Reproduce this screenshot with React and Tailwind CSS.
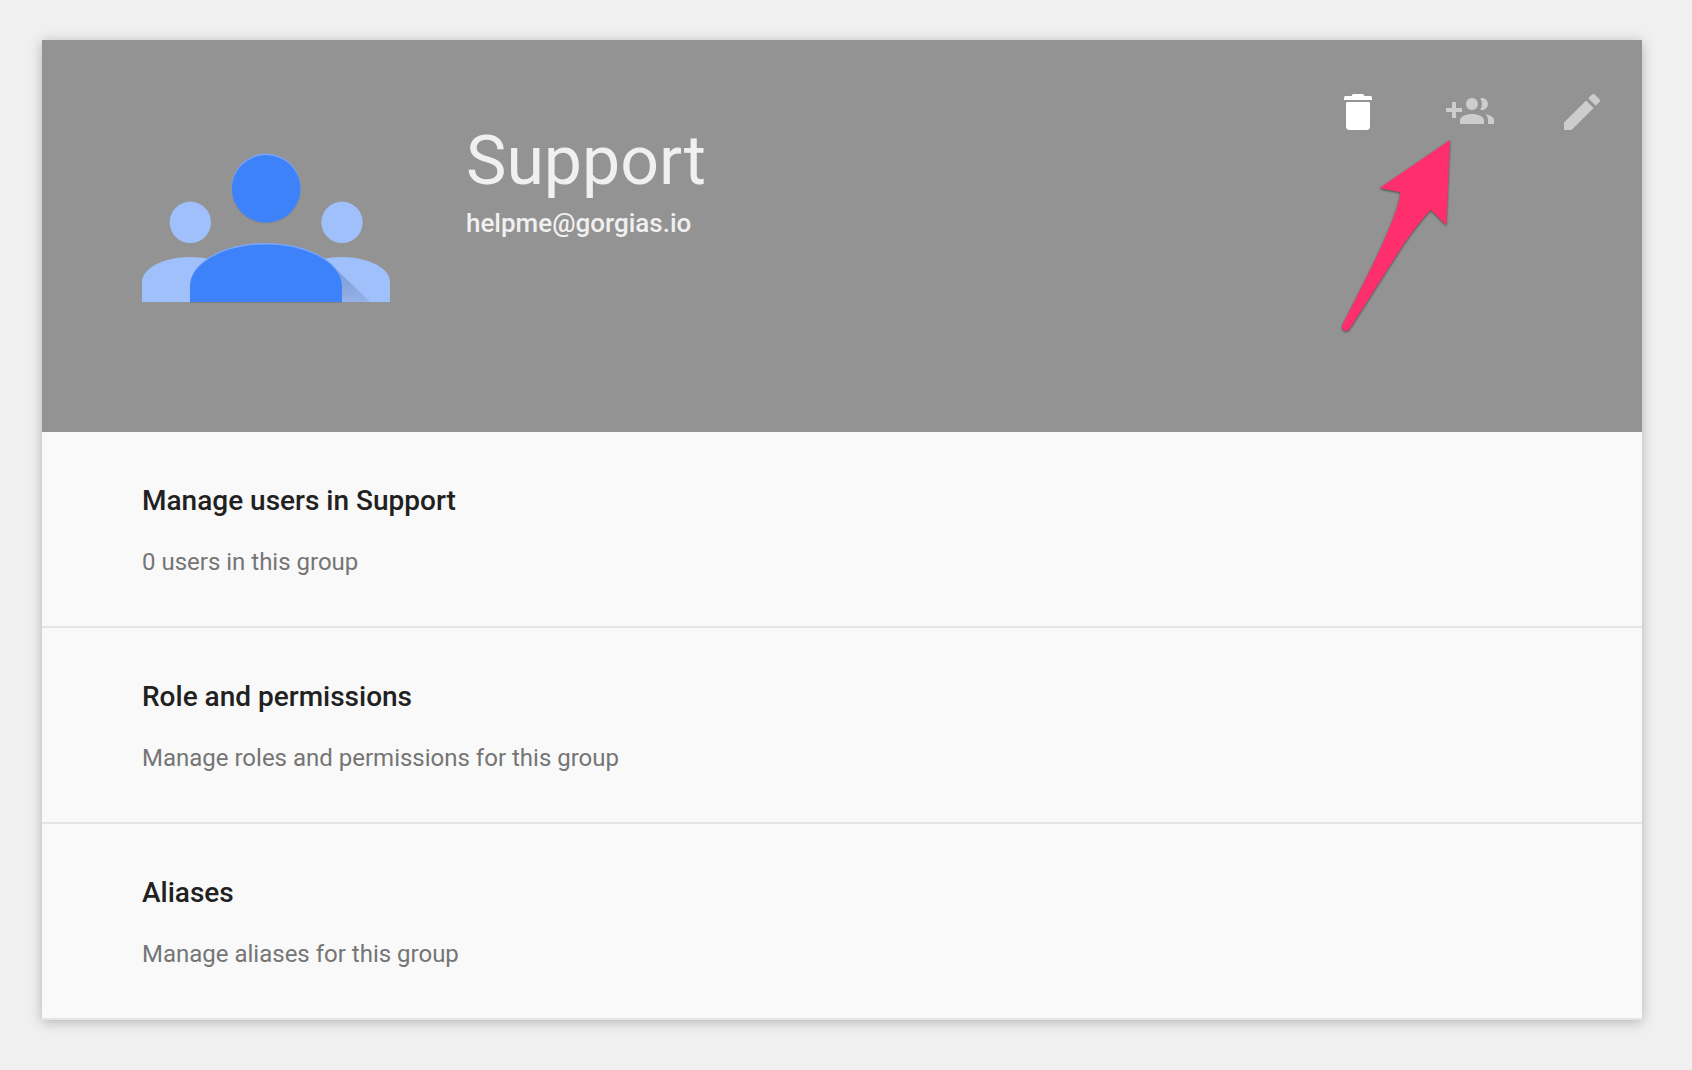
const sections = [
  { title: "Manage users in Support", detail: "0 users in this group" },
  { title: "Role and permissions", detail: "Manage roles and permissions for this group" },
  { title: "Aliases", detail: "Manage aliases for this group" },
];

const actions = [
  {
    label: "Delete group",
    tone: "text-white",
    path: "M6 19.400c0 .9.700 1.600 1.600 1.600h8.800c.9 0 1.600-.7 1.600-1.600V7.700a.7.7 0 0 0-.7-.7H6.700a.7.7 0 0 0-.7.7zM18.200 4H15.200c-.3-.7-.6-1-1.200-1h-4c-.6 0-.9.300-1.200 1H5.800a.8.8 0 0 0-.8.8V6h14V4.800a.8.8 0 0 0-.8-.8z",
  },
  {
    label: "Add users",
    tone: "text-[#cdcdcd]",
    path: "M8 10H5V7H3v3H0v2h3v3h2v-3h3v-2zm10 1c1.660 0 2.990-1.340 2.990-3S19.660 5 18 5c-.32 0-.63.05-.91.14.57.81.9 1.790.9 2.860s-.34 2.040-.9 2.860c.28.09.59.14.91.14zm-5 0c1.660 0 2.990-1.340 2.990-3S14.660 5 13 5c-1.660 0-3 1.340-3 3s1.340 3 3 3zm6.620 2.160c.83.73 1.380 1.660 1.380 2.840v2h3v-2c0-1.540-2.370-2.490-4.380-2.840zM13 13c-2 0-6 1-6 3v2h12v-2c0-2-4-3-6-3z",
  },
  {
    label: "Edit group",
    tone: "text-[#cdcdcd]",
    path: "M3 17.250V21h3.750L17.810 9.940l-3.750-3.750L3 17.250zM20.710 7.040c.39-.39.39-1.020 0-1.410l-2.340-2.340c-.39-.39-1.020-.39-1.410 0l-1.830 1.830 3.750 3.750 1.830-1.830z",
  },
];

function GroupLogo() {
  const body = "M48 150V133C48 110 82 91 124 91S200 110 200 133V150Z";
  return (
    <svg viewBox="0 0 248 152" className="h-[152px] w-[248px] shrink-0" aria-hidden="true">
      <defs>
        <linearGradient id="cast" x1="0" y1="0" x2="0" y2="1">
          <stop offset="0" stopColor="#7c9cd0" />
          <stop offset="1" stopColor="#94b1e8" />
        </linearGradient>
        <clipPath id="headClip"><circle cx="124.200" cy="36" r="34.500" /></clipPath>
        <clipPath id="bodyClip"><path d={body} /></clipPath>
      </defs>
      <g fill="#a0c0fc">
        <circle cx="48.300" cy="70.300" r="20.700" />
        <circle cx="200" cy="70.300" r="20.700" />
        <path d="M0 150V130C0 116 22 105 48 105S96 116 96 130V150Z" />
        <path d="M152 150V130C152 116 174 105 200 105S248 116 248 130V150Z" />
      </g>
      <path d="M194 117L228 150H198Z" fill="url(#cast)" />
      <g fill="#6f777f" opacity="0.6">
        <circle cx="124.200" cy="37" r="34.500" />
        <path d="M48 151V140H200V151Z" />
      </g>
      <circle cx="124.200" cy="36" r="34.500" fill="#78a6fa" />
      <circle cx="124.200" cy="37.500" r="34.500" fill="#3d82f8" clipPath="url(#headClip)" />
      <path d={body} fill="#78a6fa" />
      <g clipPath="url(#bodyClip)">
        <path d="M48 153V134.500C48 111.500 82 92.500 124 92.500S200 111.500 200 134.500V153Z" fill="#3d82f8" />
      </g>
    </svg>
  );
}

function Pointer() {
  return (
    <svg
      viewBox="60 198 342 606"
      className="pointer-events-none absolute top-24 right-[188px] h-[202px] w-[114px] overflow-visible drop-shadow-[0_1px_1px_rgba(0,0,0,0.5)]"
      aria-hidden="true"
    >
      <path
        d="M390 210L179 354L241 367C239 400 220 448 190 516C155 595 110 680 67 766C62 780 79 790 89 776C145 690 200 600 253 520C285 474 312 440 333 420L379 466Z"
        fill="#ff2e6c"
      />
    </svg>
  );
}

export default function App() {
  return (
    <main className="min-h-screen bg-[#f0f0f0] pt-10 pr-[50px] pb-[50px] pl-[42px] font-[Roboto,sans-serif]">
      <article className="bg-[#f9f9f9] shadow-[0_2px_12px_rgba(0,0,0,0.26)]">
        <header className="relative flex h-[392px] items-start justify-between bg-[#939393] pl-[100px] pr-9">
          <div className="flex gap-[76px]">
            <div className="pt-28">
              <GroupLogo />
            </div>
            <div className="pt-20 text-[#f0f0f0]">
              <h1 className="text-[68px] leading-[82px]">Support</h1>
              <p className="text-[26px] leading-[42px] font-medium">helpme@gorgias.io</p>
            </div>
          </div>
          <div className="flex gap-16 pt-12">
            {actions.map((a) => (
              <button key={a.label} type="button" aria-label={a.label} className={a.tone}>
                <svg viewBox="0 0 24 24" className="size-12 fill-current" aria-hidden="true">
                  <path d={a.path} />
                </svg>
              </button>
            ))}
          </div>
          <Pointer />
        </header>
        {sections.map((s) => (
          <button
            key={s.title}
            type="button"
            className="block w-full border-b-2 border-[#e5e5e5] px-[100px] pt-12 pb-11 text-left"
          >
            <span className="block text-[28px] leading-[42px] font-medium text-[#212121]">{s.title}</span>
            <span className="mt-5 block text-2xl leading-10 text-[#757575]">{s.detail}</span>
          </button>
        ))}
      </article>
    </main>
  );
}
